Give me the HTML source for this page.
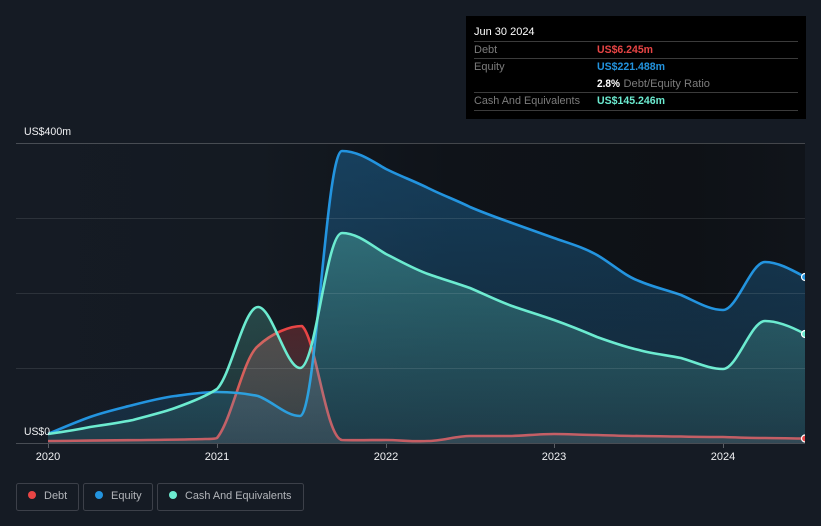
<!DOCTYPE html>
<html><head><meta charset="utf-8"><style>
html,body{margin:0;padding:0;background:#151b24}
body{width:821px;height:526px;overflow:hidden;position:relative;font-family:"Liberation Sans",sans-serif}
svg{position:absolute;left:0;top:0}
</style></head><body>
<svg width="821" height="526" viewBox="0 0 821 526" xmlns="http://www.w3.org/2000/svg">
<defs>
<linearGradient id="bg" x1="16" x2="805" y1="0" y2="0" gradientUnits="userSpaceOnUse"><stop offset="0" stop-color="#151b24"/><stop offset=".3" stop-color="#141a22"/><stop offset=".55" stop-color="#0f1319"/><stop offset=".85" stop-color="#0e1116"/><stop offset="1" stop-color="#10141a"/></linearGradient>
<linearGradient id="bgv" x1="0" x2="0" y1="143" y2="443" gradientUnits="userSpaceOnUse"><stop offset="0" stop-color="#151b24" stop-opacity="0"/><stop offset=".5" stop-color="#151b24" stop-opacity="0"/><stop offset="1" stop-color="#151b24" stop-opacity=".8"/></linearGradient>
<linearGradient id="fd" x1="0" x2="0" y1="326" y2="443" gradientUnits="userSpaceOnUse"><stop offset="0" stop-color="#e84545" stop-opacity=".27"/><stop offset="1" stop-color="#e8b0b0" stop-opacity=".12"/></linearGradient>
<linearGradient id="fe" x1="0" x2="0" y1="150" y2="443" gradientUnits="userSpaceOnUse"><stop offset="0" stop-color="#2394df" stop-opacity=".33"/><stop offset="1" stop-color="#2394df" stop-opacity=".13"/></linearGradient>
<linearGradient id="fc" x1="0" x2="0" y1="233" y2="443" gradientUnits="userSpaceOnUse"><stop offset="0" stop-color="#6cebd0" stop-opacity=".29"/><stop offset="1" stop-color="#6cebd0" stop-opacity=".09"/></linearGradient>
<clipPath id="c"><rect x="16" y="140" width="789" height="304"/></clipPath>
</defs>
<rect x="16" y="143" width="789" height="300" fill="url(#bg)"/>
<rect x="16" y="143" width="789" height="300" fill="url(#bgv)"/>
<g clip-path="url(#c)">
<path fill="url(#fd)" d="M48,441C100,440.500 170,440 205,439C211,439 215,439 217,438C232,420 243,358 258,346C272,333 290,326 302,326C316,338 326,438 342,440C356,440.500 372,440 386,440C400,440 414,442 428,441C442,441 456,436 470,436C484,436 498,436 512,436C526,435.500 540,434 554,434C568,434 583,435 597,435C611,435.500 625,436 639,436C653,436 667,436.500 681,436.500C695,437 709,437 723,437C737,437.500 751,438 765,438C778,438 792,438.500 805,438.500V443H48Z"/>
<path fill="none" stroke="#e84545" stroke-width="2.6" stroke-linejoin="round" d="M48,441C100,440.500 170,440 205,439C211,439 215,439 217,438C232,420 243,358 258,346C272,333 290,326 302,326C316,338 326,438 342,440C356,440.500 372,440 386,440C400,440 414,442 428,441C442,441 456,436 470,436C484,436 498,436 512,436C526,435.500 540,434 554,434C568,434 583,435 597,435C611,435.500 625,436 639,436C653,436 667,436.500 681,436.500C695,437 709,437 723,437C737,437.500 751,438 765,438C778,438 792,438.500 805,438.500"/>
<path fill="url(#fe)" d="M48,434C62,428 76,422 90,417C104,412 119,408.600 133,405C147,401.400 161,397.800 175,396C189,394.200 203,392 217,392C231,392 244,393 258,396C272,401 286,416 300,416C316,416 326,151 342,151C358,151 372,161 386,169C400,176 414,181 428,188C442,195 456,200 470,207C484,213 498,218 512,223C526,228 540,233 554,238C568,243 583,247 597,255C611,263 625,276 639,281C653,287 667,290 681,295C695,301 709,310 723,310C737,310 751,262 765,262C778,262 792,270 805,277V443H48Z"/>
<path fill="none" stroke="#2394df" stroke-width="2.6" d="M48,434C62,428 76,422 90,417C104,412 119,408.600 133,405C147,401.400 161,397.800 175,396C189,394.200 203,392 217,392C231,392 244,393 258,396C272,401 286,416 300,416C316,416 326,151 342,151C358,151 372,161 386,169C400,176 414,181 428,188C442,195 456,200 470,207C484,213 498,218 512,223C526,228 540,233 554,238C568,243 583,247 597,255C611,263 625,276 639,281C653,287 667,290 681,295C695,301 709,310 723,310C737,310 751,262 765,262C778,262 792,270 805,277"/>
<path fill="url(#fc)" d="M48,434C62,432 76,430 90,427C104,425 118,423 133,420C147,416 161,413 175,408C189,403 205,397 217,389C231,375 244,307 258,307C272,307 286,368 300,368C316,368 326,233 342,233C358,233 372,246 386,254C400,261 414,269 428,274C442,279 456,283 470,288C484,294 498,301 512,306C526,311 540,315 554,320C568,325 583,331 597,337C611,342 625,347 639,350C653,354 667,355 681,358C695,362 709,369 723,369C737,369 751,321 765,321C778,321 792,327 805,334V443H48Z"/>
<path fill="none" stroke="#6cebd0" stroke-width="2.6" d="M48,434C62,432 76,430 90,427C104,425 118,423 133,420C147,416 161,413 175,408C189,403 205,397 217,389C231,375 244,307 258,307C272,307 286,368 300,368C316,368 326,233 342,233C358,233 372,246 386,254C400,261 414,269 428,274C442,279 456,283 470,288C484,294 498,301 512,306C526,311 540,315 554,320C568,325 583,331 597,337C611,342 625,347 639,350C653,354 667,355 681,358C695,362 709,369 723,369C737,369 751,321 765,321C778,321 792,327 805,334"/>
</g>
<g fill="#fff">
<rect x="16" y="143" width="789" height="1" fill-opacity=".22"/>
<rect x="16" y="218" width="789" height="1" fill-opacity=".1"/>
<rect x="16" y="293" width="789" height="1" fill-opacity=".1"/>
<rect x="16" y="368" width="789" height="1" fill-opacity=".1"/>
<rect x="16" y="443" width="789" height="1" fill-opacity=".22"/>
<rect x="48" y="444" width="1" height="4" fill-opacity=".3"/>
<rect x="217" y="444" width="1" height="4" fill-opacity=".3"/>
<rect x="386" y="444" width="1" height="4" fill-opacity=".3"/>
<rect x="554" y="444" width="1" height="4" fill-opacity=".3"/>
<rect x="723" y="444" width="1" height="4" fill-opacity=".3"/>
</g>
<svg x="795" y="260" width="10" height="190" viewBox="795 260 10 190">
<circle cx="805" cy="277" r="3.500" fill="#2394df" stroke="#fff" stroke-width="1.2"/>
<circle cx="805" cy="334" r="3.500" fill="#6cebd0" stroke="#fff" stroke-width="1.2"/>
<circle cx="805" cy="438.500" r="3.500" fill="#e84545" stroke="#fff" stroke-width="1.2"/>
</svg>
<g font-size="11" fill="#f0f1f3">
<text x="24" y="135" textLength="47" lengthAdjust="spacingAndGlyphs">US$400m</text>
<text x="24" y="435" textLength="26" lengthAdjust="spacingAndGlyphs">US$0</text>
<text x="48" y="460" text-anchor="middle">2020</text>
<text x="217" y="460" text-anchor="middle">2021</text>
<text x="386" y="460" text-anchor="middle">2022</text>
<text x="554" y="460" text-anchor="middle">2023</text>
<text x="723" y="460" text-anchor="middle">2024</text>
</g>
<rect x="466" y="16" width="340" height="103" fill="#000"/>
<g fill="#3b3b3b">
<rect x="474" y="41" width="324" height="1"/>
<rect x="474" y="58" width="324" height="1"/>
<rect x="474" y="92" width="324" height="1"/>
<rect x="474" y="110" width="324" height="1"/>
</g>
<g font-size="11">
<text x="474" y="35" fill="#fff">Jun 30 2024</text>
<text x="474" y="53" fill="#7c7c7c">Debt</text>
<text x="474" y="70" fill="#7c7c7c">Equity</text>
<text x="474" y="104" fill="#7c7c7c" textLength="106" lengthAdjust="spacingAndGlyphs">Cash And Equivalents</text>
<text x="597" y="53" fill="#e84545" font-weight="bold" textLength="56" lengthAdjust="spacingAndGlyphs">US$6.245m</text>
<text x="597" y="70" fill="#2394df" font-weight="bold" textLength="68" lengthAdjust="spacingAndGlyphs">US$221.488m</text>
<text x="597" y="87" fill="#fff" font-weight="bold" textLength="23" lengthAdjust="spacingAndGlyphs">2.8%</text>
<text x="623.500" y="87" fill="#7c7c7c" textLength="86.500" lengthAdjust="spacingAndGlyphs">Debt/Equity Ratio</text>
<text x="597" y="104" fill="#6cebd0" font-weight="bold" textLength="68" lengthAdjust="spacingAndGlyphs">US$145.246m</text>
</g>
<g fill="none" stroke="#3c4049">
<rect x="16.500" y="483.500" width="62" height="27" rx="2"/>
<rect x="83.500" y="483.500" width="69" height="27" rx="2"/>
<rect x="157.500" y="483.500" width="146" height="27" rx="2"/>
</g>
<circle cx="32" cy="495" r="4" fill="#e84545"/>
<circle cx="99" cy="495" r="4" fill="#2394df"/>
<circle cx="173" cy="495" r="4" fill="#6cebd0"/>
<g font-size="11" fill="#b2b5ba">
<text x="44" y="499">Debt</text>
<text x="111" y="499">Equity</text>
<text x="185" y="499" textLength="106.500" lengthAdjust="spacingAndGlyphs">Cash And Equivalents</text>
</g>
</svg>
</body></html>
